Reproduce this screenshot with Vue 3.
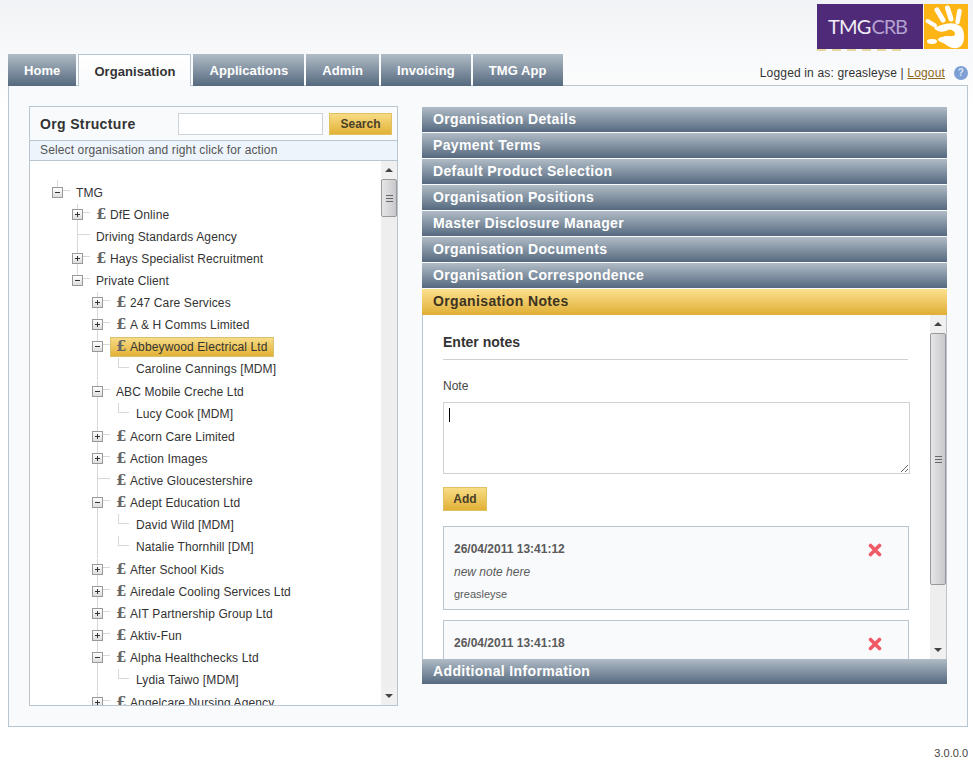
<script setup>
const tabs = ['Home', 'Organisation', 'Applications', 'Admin', 'Invoicing', 'TMG App'];

const sections = [
  'Organisation Details',
  'Payment Terms',
  'Default Product Selection',
  'Organisation Positions',
  'Master Disclosure Manager',
  'Organisation Documents',
  'Organisation Correspondence'
];

// the second note runs under the next accordion bar, only its date shows
const notes = [
  { date: '26/04/2011 13:41:12', text: 'new note here', user: 'greasleyse' },
  { date: '26/04/2011 13:41:18' }
];

// depth, label, toggle ('+', '-' or ''), has the pound icon
const tree = [
  [0, 'TMG', '-', false],
  [1, 'DfE Online', '+', true],
  [1, 'Driving Standards Agency', '', false],
  [1, 'Hays Specialist Recruitment', '+', true],
  [1, 'Private Client', '-', false],
  [2, '247 Care Services', '+', true],
  [2, 'A & H Comms Limited', '+', true],
  [2, 'Abbeywood Electrical Ltd', '-', true],
  [3, 'Caroline Cannings [MDM]', '', false],
  [2, 'ABC Mobile Creche Ltd', '-', false],
  [3, 'Lucy Cook [MDM]', '', false],
  [2, 'Acorn Care Limited', '+', true],
  [2, 'Action Images', '+', true],
  [2, 'Active Gloucestershire', '', true],
  [2, 'Adept Education Ltd', '-', true],
  [3, 'David Wild [MDM]', '', false],
  [3, 'Natalie Thornhill [DM]', '', false],
  [2, 'After School Kids', '+', true],
  [2, 'Airedale Cooling Services Ltd', '+', true],
  [2, 'AIT Partnership Group Ltd', '+', true],
  [2, 'Aktiv-Fun', '+', true],
  [2, 'Alpha Healthchecks Ltd', '-', true],
  [3, 'Lydia Taiwo [MDM]', '', false],
  [2, 'Angelcare Nursing Agency', '+', true]
].map(([depth, label, toggle, pound], i, all) => ({
  depth,
  label,
  toggle,
  pound,
  selected: label === 'Abbeywood Electrical Ltd',
  lastLeaf: depth === 3 && all[i + 1] && all[i + 1][0] < 3,
  lastSibling: label === 'Private Client'
}));

const lineLeft = depth => Math.min(depth, 2) * 20 + 27;
</script>

<template>
  <div class="page">
    <div class="logo-row">
      <div class="logo">
        <div class="logo-name">TMG<span>CRB</span></div>
        <div class="logo-hand">
          <svg width="44" height="45" viewBox="0 0 44 45">
            <g fill="none" stroke="#fff" stroke-linecap="round">
              <path d="M3.5 17 L11 21.5" stroke-width="4" />
              <path d="M13 6 L19 16" stroke-width="5" />
              <path d="M23.5 4 L27 15" stroke-width="5" />
              <path d="M35.5 7 L33.5 18" stroke-width="4.5" />
            </g>
            <path d="M10 24 C17 21 24 18 32 20 L36 22 C39 24 40 28 40 33 C40 38 38 43 33 44 C27 45 24 42 21 40 C18 38 15 38 14 36 C14 33 19 33 22 32 C26 32 31 33 31 30 C31 27 27 25 24 26 C20 28 14 29 10 24 Z" fill="#fff" />
            <ellipse cx="8" cy="37.5" rx="5" ry="2.4" fill="#fff" />
          </svg>
        </div>
      </div>
    </div>

    <div class="nav-row">
      <div class="tabs">
        <div v-for="tab in tabs" :key="tab" class="tab" :class="{ active: tab === 'Organisation' }">{{ tab }}</div>
      </div>
      <div class="user">
        Logged in as: greasleyse | <a class="logout">Logout</a>
        <span class="help">?</span>
      </div>
    </div>

    <div class="main">
      <div class="org">
        <div class="org-head">
          <h2>Org Structure</h2>
          <input class="search-input" type="text" />
          <button class="gold-btn search-btn">Search</button>
        </div>
        <div class="org-hint">Select organisation and right click for action</div>
        <div class="org-body">
          <div class="tree">
            <div
              v-for="row in tree"
              :key="row.label"
              class="row"
              :class="{ 'last-leaf': row.lastLeaf }"
              :style="{ paddingLeft: 22 + row.depth * 20 + 'px' }"
            >
              <i
                v-if="row.depth > 0"
                class="vline"
                :class="{ half: row.lastSibling }"
                :style="{ left: lineLeft(row.depth) + 'px' }"
              ></i>
              <i v-if="row.depth === 0" class="vline top"></i>
              <i v-if="row.depth === 3" class="elbow"></i>
              <i v-else class="stub" :style="{ left: lineLeft(row.depth) + 'px' }"></i>
              <span class="toggle" :class="{ none: !row.toggle, plus: row.toggle === '+' }"></span>
              <span class="label" :class="{ selected: row.selected }">
                <b v-if="row.pound" class="pound">£</b>{{ row.label }}
              </span>
            </div>
          </div>
          <div class="scrollbar">
            <div class="sb-btn"><i class="arrow up"></i></div>
            <div class="sb-thumb left-thumb"><i class="grip"></i></div>
            <div class="sb-track"></div>
            <div class="sb-btn"><i class="arrow down"></i></div>
          </div>
        </div>
      </div>

      <div class="accordion">
        <div v-for="s in sections" :key="s" class="acc-head">{{ s }}</div>
        <div class="acc-head open">Organisation Notes</div>
        <div class="acc-body">
          <div class="notes">
            <h3>Enter notes</h3>
            <label class="note-label">Note</label>
            <div class="note-input">
              <textarea></textarea>
              <i class="caret"></i>
            </div>
            <button class="gold-btn add-btn">Add</button>
            <div v-for="n in notes" :key="n.date" class="note">
              <div class="note-top">
                <strong>{{ n.date }}</strong>
                <svg class="del" width="14" height="14" viewBox="0 0 14 14">
                  <path d="M2.5 2.5 L11.5 11.5 M11.5 2.5 L2.5 11.5" stroke="#f05a66" stroke-width="3.6" stroke-linecap="round" />
                </svg>
              </div>
              <em v-if="n.text">{{ n.text }}</em>
              <small v-if="n.user">{{ n.user }}</small>
            </div>
          </div>
          <div class="scrollbar">
            <div class="sb-btn"><i class="arrow up"></i></div>
            <div class="sb-thumb right-thumb"><i class="grip"></i></div>
            <div class="sb-track"></div>
            <div class="sb-btn"><i class="arrow down"></i></div>
          </div>
        </div>
        <div class="acc-head">Additional Information</div>
      </div>
    </div>

    <div class="version">3.0.0.0</div>
  </div>
</template>

<style>
html, body {
  margin: 0;
  height: 100%;
  overflow: hidden;
  background: linear-gradient(#f1f3f6 0, #fff 110px) no-repeat #fff;
}
</style>

<style scoped>
.page {
  width: 960px;
  margin-left: 8px;
  padding-top: 4px;
  font-family: 'Liberation Sans', Arial, sans-serif;
  font-size: 12px;
  color: #333;
}

.logo-row {
  display: flex;
  justify-content: flex-end;
  height: 50px;
}
.logo {
  display: flex;
  height: 45px;
}
.logo-name {
  position: relative;
  width: 106px;
  margin-right: 1px;
  background: #4f2a78;
  color: #f1edf6;
  font-family: Lato, sans-serif;
  font-size: 20px;
  line-height: 44px;
  padding-left: 11px;
  box-sizing: border-box;
  letter-spacing: -0.8px;
}
.logo-name span {
  color: #b3a2d0;
  margin-left: 1px;
  letter-spacing: -1.2px;
}
/* tail of the logo's tagline, cropped off in the artwork */
.logo-name::after {
  content: '';
  position: absolute;
  left: 0;
  right: 20px;
  top: 45px;
  height: 2px;
  background: repeating-linear-gradient(90deg, #e5d6a0 0 9px, transparent 9px 15px);
}
.logo-hand {
  width: 44px;
  background: #fdb515;
}
.logo-hand svg {
  display: block;
}

.nav-row {
  display: flex;
  justify-content: space-between;
  height: 31px;
}
.tabs {
  display: flex;
  gap: 2px;
  align-items: flex-start;
}
.tab {
  height: 32px;
  line-height: 34px;
  padding: 0 16px;
  box-sizing: border-box;
  background: linear-gradient(#b0bcc6, #56697f);
  color: #fff;
  font-size: 13px;
  font-weight: bold;
  letter-spacing: 0.07px;
}
.tab.active {
  position: relative;
  z-index: 1;
  background: linear-gradient(#fff, #f9fafc);
  color: #333;
  border: 1px solid #b8c6d2;
  border-bottom: 0;
  padding: 0 15px;
}
.user {
  padding-top: 12px;
  display: flex;
  align-items: flex-start;
  white-space: pre;
  line-height: 14px;
  letter-spacing: 0.16px;
}
.logout {
  color: #8a6a1c;
  text-decoration: underline;
}
.help {
  width: 14px;
  height: 14px;
  border-radius: 50%;
  margin-left: 9px;
  background: #7d9fd4;
  color: #dbe6f5;
  font-size: 10px;
  font-weight: bold;
  line-height: 14px;
  text-align: center;
}

.main {
  display: flex;
  align-items: flex-start;
  gap: 24px;
  height: 642px;
  box-sizing: border-box;
  padding: 20px;
  background: #f9fafc;
  border: 1px solid #b8c6d2;
}

.org {
  width: 369px;
  height: 600px;
  flex: none;
  box-sizing: border-box;
  display: flex;
  flex-direction: column;
  border: 1px solid #b8c6d2;
  background: #fff;
}
.org-head {
  display: flex;
  align-items: center;
  height: 33px;
  padding: 0 5px 0 10px;
  background: #f9fafc;
}
.org-head h2 {
  margin: 0 auto 0 0;
  font-size: 14px;
  font-weight: bold;
  color: #333;
  letter-spacing: 0.35px;
}
.search-input {
  width: 145px;
  height: 22px;
  box-sizing: border-box;
  margin: 0 6px 0 0;
  border: 1px solid #c9d3db;
  background: #fff;
  padding: 0;
}
.gold-btn {
  border: 1px solid #e0c060;
  background: linear-gradient(#f7dc85, #e2b136);
  color: #4a3f28;
  font-family: inherit;
  font-weight: bold;
  font-size: 12px;
  padding: 0;
}
.search-btn {
  width: 63px;
  height: 22px;
}
.org-hint {
  height: 19px;
  line-height: 18px;
  padding-left: 10px;
  background: #eef4fb;
  border-top: 1px solid #b8c6d2;
  border-bottom: 1px solid #b8c6d2;
  color: #555;
  letter-spacing: 0.13px;
}
.org-body {
  flex: 1;
  min-height: 0;
  display: flex;
}
.tree {
  flex: 1;
  min-width: 0;
  overflow: hidden;
  padding-top: 21px;
  box-sizing: border-box;
}
.row {
  position: relative;
  height: 22px;
  display: flex;
  align-items: center;
  white-space: nowrap;
  color: #333;
  letter-spacing: 0.12px;
}
.row.last-leaf {
  margin-bottom: 1px;
}
.vline {
  position: absolute;
  top: 0;
  bottom: 0;
  border-left: 1px solid #d8d8d8;
}
.vline.half {
  bottom: 12px;
}
.vline.top {
  left: 27px;
  top: -2px;
  bottom: 14px;
}
.stub {
  position: absolute;
  top: 8px;
  width: 13px;
  border-top: 1px solid #d8d8d8;
}
.elbow {
  position: absolute;
  left: 88px;
  top: 0;
  width: 10px;
  height: 9px;
  border-left: 1px solid #d8d8d8;
  border-bottom: 1px solid #d8d8d8;
}
.toggle {
  position: relative;
  flex: none;
  width: 11px;
  height: 11px;
  margin-right: 7px;
  margin-top: -1px;
  box-sizing: border-box;
  border: 1px solid #999;
  background: linear-gradient(#fff, #ddd);
}
.toggle.none {
  visibility: hidden;
}
.toggle::before {
  content: '';
  position: absolute;
  left: 2px;
  right: 2px;
  top: 4px;
  border-top: 1px solid #333;
}
.toggle.plus::after {
  content: '';
  position: absolute;
  top: 2px;
  bottom: 2px;
  left: 4px;
  border-left: 1px solid #333;
}
.label {
  position: relative;
  height: 20px;
  box-sizing: border-box;
  padding: 0 5px 0 5px;
  border: 1px solid transparent;
  line-height: 18px;
}
.label.selected {
  border-color: #d9bf70;
  background: linear-gradient(#f7dc85, #e2b136);
}
.pound {
  display: inline-block;
  width: 14px;
  font-family: 'DejaVu Serif', serif;
  font-size: 15px;
  line-height: 14px;
  font-weight: bold;
  color: #666;
}

.scrollbar {
  flex: none;
  width: 16px;
  display: flex;
  flex-direction: column;
  background: #eee;
}
.sb-btn {
  height: 18px;
  display: flex;
  align-items: center;
  justify-content: center;
  background: #f0f0f0;
}
.arrow {
  width: 0;
  height: 0;
  border-left: 4px solid transparent;
  border-right: 4px solid transparent;
}
.arrow.up {
  border-bottom: 4px solid #444;
}
.arrow.down {
  border-top: 4px solid #444;
}
.sb-thumb {
  display: flex;
  align-items: center;
  justify-content: center;
  box-sizing: border-box;
  border: 1px solid #999;
  border-radius: 2px;
  background: linear-gradient(90deg, #e6e6e8, #c8c8cc);
}
.left-thumb {
  height: 38px;
}
.right-thumb {
  height: 252px;
}
.sb-track {
  flex: 1;
}
.grip {
  width: 7px;
  height: 5px;
  border-top: 1px solid #666;
  border-bottom: 1px solid #666;
  background: linear-gradient(#666, #666) center / 100% 1px no-repeat;
}

.accordion {
  width: 525px;
  flex: none;
  margin-top: 1px;
}
.acc-head {
  height: 25px;
  margin-bottom: 1px;
  line-height: 25px;
  padding-left: 11px;
  background: linear-gradient(#b0bcc6, #56697f);
  color: #fff;
  font-size: 14px;
  font-weight: bold;
  letter-spacing: 0.36px;
}
.acc-head:last-child {
  margin-bottom: 0;
}
.acc-head.open {
  margin-bottom: 0;
  height: 26px;
  background: linear-gradient(#fde18f, #dfae35);
  color: #3c3323;
}
.acc-body {
  display: flex;
  height: 344px;
  background: #fff;
  border-left: 1px solid #b8c6d2;
  border-right: 1px solid #b8c6d2;
}
.notes {
  flex: 1;
  min-width: 0;
  overflow: hidden;
  padding: 0 20px;
}
.notes h3 {
  width: 465px;
  margin: 18px 0 0;
  padding-bottom: 8px;
  font-size: 14px;
  line-height: 18px;
  color: #333;
  border-bottom: 1px solid #ccd2d6;
}
.note-label {
  display: block;
  margin-top: 18px;
  line-height: 16px;
  color: #444;
}
.note-input {
  position: relative;
  margin-top: 8px;
  width: 467px;
  height: 72px;
}
.note-input textarea {
  display: block;
  width: 100%;
  height: 100%;
  margin: 0;
  padding: 0;
  box-sizing: border-box;
  border: 1px solid #ccd2d6;
  outline: 0;
}
.caret {
  position: absolute;
  left: 6px;
  top: 6px;
  height: 14px;
  border-left: 1px solid #000;
}
.add-btn {
  display: block;
  width: 44px;
  height: 24px;
  margin-top: 13px;
}
.note {
  width: 466px;
  height: 84px;
  margin-top: 15px;
  box-sizing: border-box;
  padding: 15px 10px 0;
  background: #f9fafc;
  border: 1px solid #b8c6d2;
  color: #5a5a5a;
}
.note + .note {
  margin-top: 10px;
}
.note-top {
  display: flex;
  justify-content: space-between;
  height: 14px;
  line-height: 14px;
  padding-right: 16px;
}
.del {
  display: block;
  margin-top: 1px;
}
.note em {
  display: block;
  margin-top: 9px;
  line-height: 14px;
}
.note small {
  display: block;
  margin-top: 8px;
  font-size: 11px;
  line-height: 14px;
}

.version {
  margin-top: 19px;
  text-align: right;
  font-size: 11px;
  line-height: 14px;
  color: #444;
}
</style>
